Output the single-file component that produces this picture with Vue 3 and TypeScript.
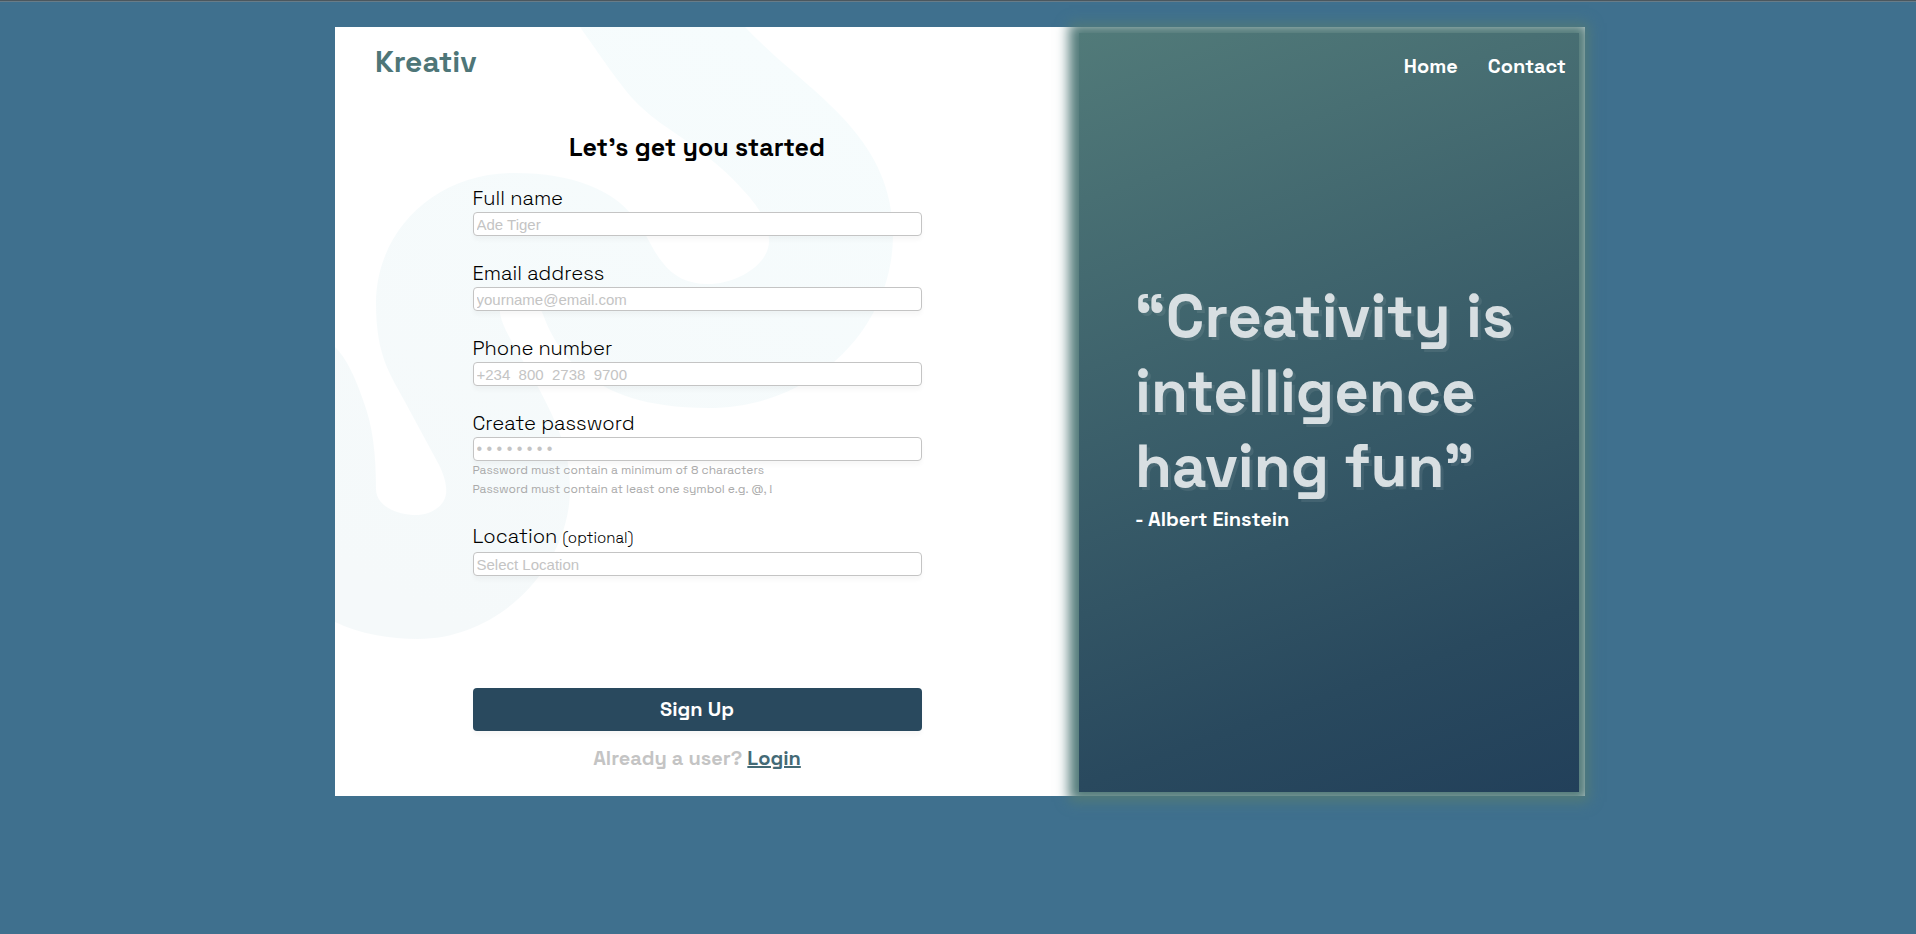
<script setup lang="ts">
interface Field {
  id: string
  label: string
  note?: string
  type: string
  placeholder: string
  hints?: string[]
}

const fields: Field[] = [
  { id: 'full-name', label: 'Full name', type: 'text', placeholder: 'Ade Tiger' },
  { id: 'email', label: 'Email address', type: 'email', placeholder: 'yourname@email.com' },
  { id: 'phone', label: 'Phone number', type: 'tel', placeholder: '+234  800  2738  9700' },
  {
    id: 'password',
    label: 'Create password',
    type: 'password',
    placeholder: '• • • • • • • •',
    hints: [
      'Password must contain a minimum of 8 characters',
      'Password must contain at least one symbol e.g. @, !',
    ],
  },
  { id: 'location', label: 'Location', note: '(optional)', type: 'text', placeholder: 'Select Location' },
]
</script>

<template>
  <div class="page">
    <main class="card">
      <section class="signup">
        <svg class="swirl" viewBox="0 0 744 769" width="744" height="769" aria-hidden="true">
          <defs>
            <linearGradient id="swirl-fill" x1="0.75" y1="0" x2="0.25" y2="1">
              <stop offset="0" stop-color="#f6fcfd" />
              <stop offset="1" stop-color="#f5f9fa" />
            </linearGradient>
          </defs>
          <path
            fill="url(#swirl-fill)"
            fill-rule="evenodd"
            d="M245 0 C264 27 275 43 285 56 C305 84 326 96 350 113 C377 132 395 148 408 163 C423 179 434 195 434 214
               C434 238 401 257 373 257 C352 257 338 249 328 236 C316 222 310 202 298 189 C278 164 240 146 179 146
               C98 146 41 206 41 276 C41 330 56 348 69 373 L103 436 C110 449 112 460 111 467 C109 480 95 488 81 488
               C62 488 41 479 41 462 C41 428 38 399 28 373 C20 350 12 332 0 320 L0 595 C25 607 55 612 83 612
               C166 612 235 538 235 462 C235 425 224 400 203 360 C193 340 165 300 165 285 C165 270 192 262 207 285
               C220 320 250 381 373 381 C480 381 558 300 558 208 C558 105 470 64 410 0 Z"
          />
        </svg>

        <h1 class="brand">Kreativ</h1>

        <form class="form" @submit.prevent>
          <h2 class="title">Let’s get you started</h2>
          <div v-for="field in fields" :key="field.id" class="field">
            <label :for="field.id">
              {{ field.label }} <small v-if="field.note">{{ field.note }}</small>
            </label>
            <input :id="field.id" :type="field.type" :placeholder="field.placeholder" />
            <p v-for="hint in field.hints" :key="hint" class="hint">{{ hint }}</p>
          </div>
          <button type="submit" class="submit">Sign Up</button>
          <p class="login">Already a user? <a href="#login">Login</a></p>
        </form>
      </section>

      <aside class="panel">
        <nav class="nav">
          <a href="#home">Home</a>
          <a href="#contact">Contact</a>
        </nav>
        <figure class="quote">
          <blockquote>“Creativity is intelligence having fun”</blockquote>
          <figcaption>- Albert Einstein</figcaption>
        </figure>
      </aside>
    </main>
  </div>
</template>

<style>
body {
  background: #3f708e;
}
</style>

<style scoped>
.page {
  box-sizing: border-box;
  min-height: 100vh;
  padding: 26px 20px 26px 24px;
  border-top: 1px solid #4b575e;
  background: #3f708e;
  box-shadow: inset 0 1px 0 #687c88;
  color: #000;
  font-family: "Space Grotesk", Inter, "Liberation Sans", sans-serif;
}

.card {
  display: grid;
  grid-template-columns: 1fr 500px;
  box-sizing: border-box;
  max-width: 1250px;
  margin: 0 auto;
  padding: 6px 6px 4px 0;
  background: #fff;
}

.signup {
  position: relative;
  margin: -6px 0 -4px;
  padding: 17px 40px 25px;
}

.swirl {
  position: absolute;
  top: 0;
  left: 0;
}

.brand {
  position: relative;
  margin: 0;
  color: #4e7678;
  font-size: 30px;
  font-weight: 600;
  line-height: 36px;
}

.form {
  position: relative;
  box-sizing: border-box;
  width: 469px;
  max-width: 100%;
  margin: 47px auto 0;
  padding-right: 20px;
}

.title {
  margin: 0 0 17px;
  font-size: 25px;
  font-weight: 600;
  line-height: 40px;
  text-align: center;
}

.field {
  margin-bottom: 23px;
}

.field label {
  display: block;
  font-size: 20px;
  font-weight: 300;
  line-height: 28px;
}

.field small {
  font-size: 15px;
}

.field input {
  display: block;
  box-sizing: border-box;
  width: 100%;
  height: 24px;
  padding: 0 3px;
  border: 1px solid #c4c4c4;
  border-radius: 4px;
  background: #fff;
  box-shadow: 0 4px 4px rgba(0, 0, 0, 0.03);
  font-family: "Liberation Sans", Arial, sans-serif;
  font-size: 15px;
}

.field input[type="password"] {
  font-size: 16px;
}

.field input::placeholder {
  color: #c4c4c4;
  opacity: 1;
}

.hint {
  margin: 0;
  color: #aaa;
  font-size: 12px;
  font-weight: 400;
  line-height: 19px;
}

.submit {
  display: block;
  width: 100%;
  height: 43px;
  margin-top: 112px;
  padding: 0 0 2px;
  border: 0;
  border-radius: 4px;
  background: #29495e;
  box-shadow: 0 4px 4px rgba(0, 0, 0, 0.03);
  color: #fff;
  font-family: inherit;
  font-size: 20px;
  font-weight: 700;
}

.login {
  margin: 14px 0 0;
  color: #c4c4c4;
  font-size: 20px;
  font-weight: 600;
  line-height: 26px;
  text-align: center;
}

.login a {
  color: #446a76;
}

.panel {
  position: relative;
  box-sizing: border-box;
  padding: 20px 13px 20px 56px;
  background: linear-gradient(160deg, #517a79 0%, #29495e 80%, #22405a 100%);
  box-shadow: 0 0 12px 10px #517a79;
  color: #fff;
}

.nav {
  display: flex;
  justify-content: flex-end;
  gap: 30px;
  font-size: 20px;
  font-weight: 700;
  line-height: 26px;
}

.nav a {
  color: inherit;
  text-decoration: none;
}

.quote {
  margin: 200px 0 0;
}

.quote blockquote {
  margin: 0;
  color: #d8dfe2;
  font-size: 60px;
  font-weight: 700;
  line-height: 75px;
  text-shadow: 3px 3px 0 rgba(255, 255, 255, 0.08);
}

.quote figcaption {
  margin-top: 2px;
  font-size: 20px;
  font-weight: 700;
  line-height: 26px;
}
</style>
